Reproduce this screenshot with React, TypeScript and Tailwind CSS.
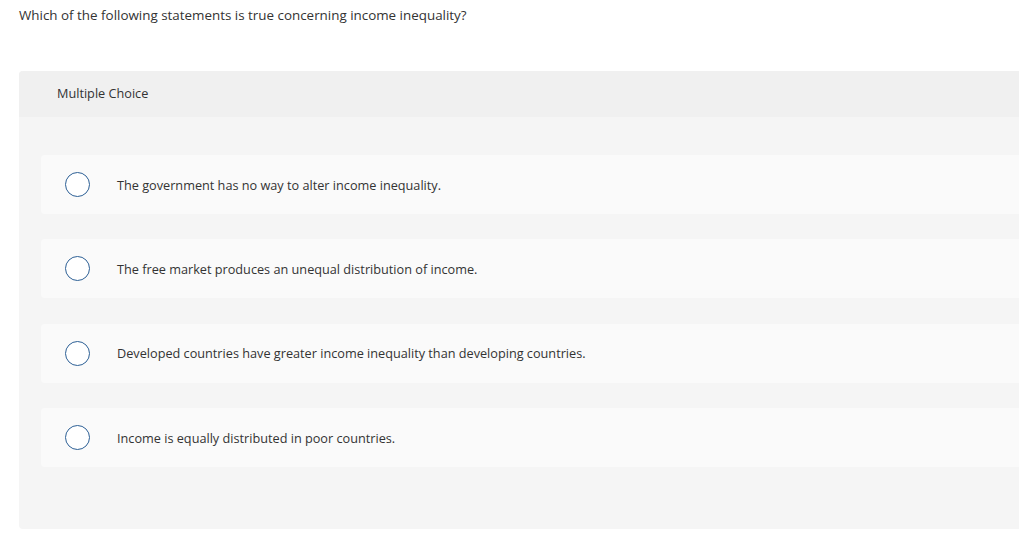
import React from "react";

const options = [
  "The government has no way to alter income inequality.",
  "The free market produces an unequal distribution of income.",
  "Developed countries have greater income inequality than developing countries.",
  "Income is equally distributed in poor countries.",
];

export default function App() {
  return (
    <div
      className="w-[1019px] h-[552px] bg-white overflow-hidden text-[#333333]"
      style={{ fontFamily: "'Open Sans', Lato, sans-serif" }}
    >
      <div className="pl-[19px] pt-[6px] h-[71px] text-[13.4px] leading-[18px]">
        Which of the following statements is true concerning income inequality?
      </div>
      <div className="ml-[19px] rounded-l-[4px] bg-[#f5f5f5] h-[458px] overflow-hidden">
        <div className="h-[46px] bg-[#f0f0f0] flex items-center pl-[38px] text-[12.7px]">
          Multiple Choice
        </div>
        <div className="pt-[38px] pl-[22px] flex flex-col gap-[25.4px]">
          {options.map((o) => (
            <div
              key={o}
              className="h-[59px] bg-[#fafafa] rounded-l-[4px] flex items-center pl-[24px]"
            >
              <div className="w-[25px] h-[25px] rounded-full border-[1.5px] border-[#2c5f95] bg-white shrink-0" />
              <div className="ml-[27px] text-[12.7px] leading-[18px]">{o}</div>
            </div>
          ))}
        </div>
      </div>
    </div>
  );
}
